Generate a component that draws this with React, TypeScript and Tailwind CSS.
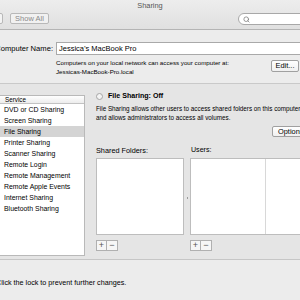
import { Search } from 'lucide-react';

const services = [
  'DVD or CD Sharing',
  'Screen Sharing',
  'File Sharing',
  'Printer Sharing',
  'Scanner Sharing',
  'Remote Login',
  'Remote Management',
  'Remote Apple Events',
  'Internet Sharing',
  'Bluetooth Sharing',
];

function PlusMinus() {
  return (
    <div className="flex h-[11px] mt-[5px]">
      <div className="w-[11px] h-[11px] border border-[#b0b0b0] bg-[#f6f6f6] flex items-center justify-center text-[9px] leading-none text-[#555]">
        +
      </div>
      <div className="w-[11px] h-[11px] border border-l-0 border-[#b0b0b0] bg-[#f6f6f6] flex items-center justify-center text-[9px] leading-none text-[#555]">
        −
      </div>
    </div>
  );
}

export default function App() {
  return (
    <div
      className="w-[300px] h-[300px] overflow-hidden bg-[#ececec] flex flex-col text-black"
      style={{ fontFamily: "'Liberation Sans', Arial, sans-serif" }}
    >
      {/* Toolbar */}
      <div className="h-[30px] shrink-0 border-b border-[#b4b4b4] bg-gradient-to-b from-[#ededed] to-[#e0e0e0]">
        <div className="text-center text-[7.4px] leading-[10px] pt-[1px] text-[#555]">Sharing</div>
        <div className="flex items-start mt-[2px]">
          <div className="ml-[-12px] w-[15px] h-[11px] border border-[#b8b8b8] rounded-[2px] bg-[#f3f3f3]" />
          <div className="ml-[7px] w-[39px] h-[11px] border border-[#b8b8b8] rounded-[2px] bg-[#f1f1f1] text-[7.5px] leading-[9px] text-center text-[#8a8a8a]">
            Show All
          </div>
          <div className="ml-auto mr-[-12px] w-[74px] h-[12px] border border-[#a8a8a8] rounded-full bg-white flex items-center pl-[4px]">
            <Search className="w-[7px] h-[7px] text-[#777]" strokeWidth={2.5} />
          </div>
        </div>
      </div>

      {/* Computer name */}
      <div className="h-[54px] shrink-0 border-b border-[#c9c9c9] pt-[12px]">
        <div className="flex items-center">
          <div className="ml-[-40px] w-[93px] text-right text-[7.6px] leading-[13px] whitespace-nowrap">Computer Name:</div>
          <div className="ml-[3px] flex-1 mr-[-20px] h-[13px] border border-[#a9a9a9] bg-white text-[7.5px] leading-[11px] pl-[2px]">
            Jessica’s MacBook Pro
          </div>
        </div>
        <div className="flex">
          <div className="ml-[56px] mt-[3px] text-[6.2px] leading-[9px] whitespace-nowrap">
            <div>Computers on your local network can access your computer at:</div>
            <div>Jessicas-MacBook-Pro.local</div>
          </div>
          <div className="ml-auto mr-[1px] mt-[5px] w-[28px] h-[12px] border border-[#a0a0a0] rounded-[2px] bg-gradient-to-b from-white to-[#f0f0f0] text-[7.4px] leading-[10px] text-center">
            Edit...
          </div>
        </div>
      </div>

      {/* Main band */}
      <div className="h-[176px] shrink-0 border-b border-[#c6c6c6] bg-[#e5e5e5] flex pt-[11px]">
        {/* Service list */}
        <div className="w-[85px] h-[161px] border border-l-0 border-[#b9b9b9] bg-white shrink-0">
          <div className="h-[8px] border-b border-[#c2c2c2] bg-gradient-to-b from-white to-[#ececec] text-[6.3px] leading-[7px] pl-[5px]">
            Service
          </div>
          {services.map((s) => (
            <div
              key={s}
              className={`h-[11px] text-[6.9px] leading-[11px] pl-[4px] whitespace-nowrap ${
                s === 'File Sharing' ? 'bg-[#d4d4d4]' : ''
              }`}
            >
              {s}
            </div>
          ))}
        </div>

        {/* Right pane */}
        <div className="flex-1 pl-[11px] min-w-0">
          <div className="flex items-center h-[7px] mt-[-2px]">
            <div className="w-[7px] h-[7px] rounded-full border border-[#a5a5a5] bg-[#f4f4f4] shrink-0" />
            <div className="ml-[5px] text-[7.1px] leading-[9px] font-bold whitespace-nowrap">File Sharing: Off</div>
          </div>
          <div className="mt-[5px] text-[6.3px] leading-[8.5px] whitespace-nowrap">
            <div>File Sharing allows other users to access shared folders on this computer,</div>
            <div>and allows administrators to access all volumes.</div>
          </div>
          <div className="flex justify-end">
            <div className="mt-[4px] mr-[-14px] w-[42px] h-[11px] border border-[#a0a0a0] rounded-[2px] bg-gradient-to-b from-white to-[#f0f0f0] text-[7.4px] leading-[9px] pl-[5px]">
              Options...
            </div>
          </div>
          <div className="flex mt-[9px]">
            <div className="w-[88px] shrink-0">
              <div className="text-[7.3px] leading-[9px]">Shared Folders:</div>
              <div className="mt-[3px] h-[77px] border border-[#bdbdbd] bg-white" />
              <PlusMinus />
            </div>
            <div className="w-[6px] shrink-0 flex justify-center items-start pt-[51px]">
              <div className="w-[1px] h-[2px] bg-[#9a9a9a]" />
            </div>
            <div className="flex-1 mr-[-10px]">
              <div className="text-[7.1px] leading-[9px] pl-[1px]">Users:</div>
              <div className="mt-[3px] h-[77px] border border-[#bdbdbd] bg-white flex">
                <div className="w-[75px] border-r border-[#d8d8d8]" />
              </div>
              <PlusMinus />
            </div>
          </div>
        </div>
      </div>

      {/* Lock area */}
      <div className="flex-1 pt-[18px]">
        <div className="ml-[-4px] text-[7.2px] leading-[10px] whitespace-nowrap">
          Click the lock to prevent further changes.
        </div>
      </div>
    </div>
  );
}
